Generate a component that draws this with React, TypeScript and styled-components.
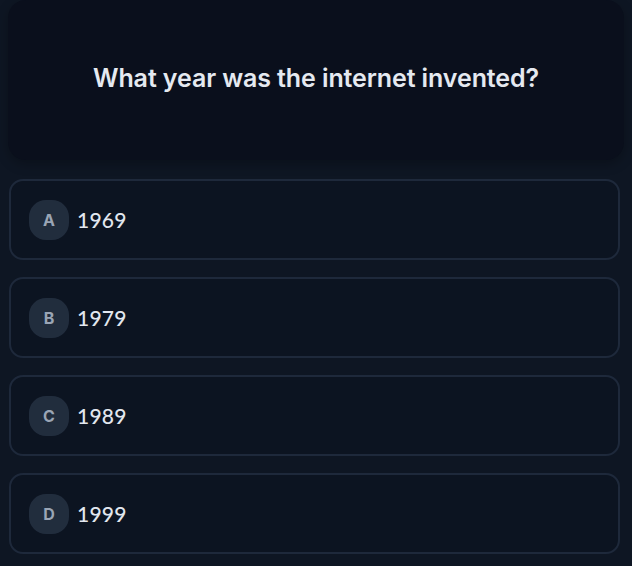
import styled, { createGlobalStyle } from 'styled-components'

const GlobalStyle = createGlobalStyle`
  html, body {
    margin: 0;
    padding: 0;
    background: #0e1623;
  }
  * {
    box-sizing: border-box;
  }
`

const Page = styled.div`
  display: flex;
  flex-direction: column;
  gap: 19px;
  padding: 0 8px 8px;
  width: 632px;
  min-height: 566px;
  background: #0e1623;
`

const QuestionCard = styled.div`
  display: flex;
  align-items: center;
  justify-content: center;
  height: 160px;
  border-radius: 18px;
  background: #0a0f1c;
  box-shadow: 0 4px 12px rgba(0, 0, 0, 0.25);
`

const QuestionText = styled.h1`
  margin: 0 0 4px;
  font-family: Inter, 'Liberation Sans', sans-serif;
  font-size: 25px;
  font-weight: 600;
  letter-spacing: -0.1px;
  color: #e5e9f0;
`

const OptionList = styled.div`
  display: flex;
  flex-direction: column;
  gap: 17px;
  padding: 0 4px 0 1px;
`

const OptionButton = styled.button`
  display: flex;
  align-items: center;
  gap: 8px;
  height: 81px;
  padding: 0 18px;
  border: 2px solid #1e293b;
  border-radius: 14px;
  background: #0c1421;
  cursor: pointer;
  text-align: left;
`

const Badge = styled.span`
  display: flex;
  align-items: center;
  justify-content: center;
  width: 40px;
  height: 40px;
  border-radius: 17px;
  background: rgba(51, 65, 85, 0.55);
  font-family: Inter, 'Liberation Sans', sans-serif;
  font-size: 16px;
  font-weight: 700;
  color: #9aa5b5;
`

const OptionLabel = styled.span`
  font-family: Lato, 'Noto Sans', sans-serif;
  font-size: 21px;
  font-weight: 500;
  letter-spacing: 0.2px;
  color: #e2e7ef;
`

const options = [
  { key: 'A', label: '1969' },
  { key: 'B', label: '1979' },
  { key: 'C', label: '1989' },
  { key: 'D', label: '1999' },
]

export default function App() {
  return (
    <>
      <GlobalStyle />
      <Page>
        <QuestionCard>
          <QuestionText>What year was the internet invented?</QuestionText>
        </QuestionCard>
        <OptionList>
          {options.map((option) => (
            <OptionButton key={option.key}>
              <Badge>{option.key}</Badge>
              <OptionLabel>{option.label}</OptionLabel>
            </OptionButton>
          ))}
        </OptionList>
      </Page>
    </>
  )
}
